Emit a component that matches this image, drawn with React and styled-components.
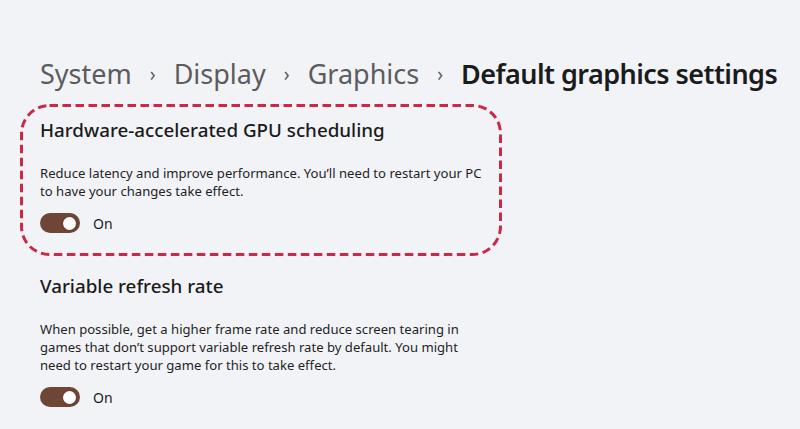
import styled, { createGlobalStyle } from 'styled-components';
import { useState } from 'react';

const GlobalStyle = createGlobalStyle`
  html, body {
    margin: 0;
    padding: 0;
    background: #f2f3f7;
  }
  body {
    font-family: 'Noto Sans', 'Open Sans', sans-serif;
    color: #1b1b1b;
  }
`;

const crumbs = ['System', 'Display', 'Graphics'];

function Toggle({ on, onClick }) {
  return (
    <ToggleRow onClick={onClick}>
      <Track $on={on}>
        <Knob $on={on} />
      </Track>
      <ToggleLabel>{on ? 'On' : 'Off'}</ToggleLabel>
    </ToggleRow>
  );
}

export default function App() {
  const [gpu, setGpu] = useState(true);
  const [vrr, setVrr] = useState(true);

  return (
    <>
      <GlobalStyle />
      <Page>
        <Breadcrumb>
          {crumbs.map((c) => (
            <Crumb key={c}>
              {c}
              <Chevron>›</Chevron>
            </Crumb>
          ))}
          <Current>Default graphics settings</Current>
        </Breadcrumb>

        <Section $highlight>
          <Outline>
            <rect x='1.5' y='1.5' width='479' height='149' rx='28' />
          </Outline>
          <Title>Hardware-accelerated GPU scheduling</Title>
          <Description>
            Reduce latency and improve performance. You’ll need to restart your PC
            to have your changes take effect.
          </Description>
          <Toggle on={gpu} onClick={() => setGpu(!gpu)} />
        </Section>

        <Section>
          <Title>Variable refresh rate</Title>
          <Description>
            When possible, get a higher frame rate and reduce screen tearing in
            games that don’t support variable refresh rate by default. You might
            need to restart your game for this to take effect.
          </Description>
          <Toggle on={vrr} onClick={() => setVrr(!vrr)} />
        </Section>
      </Page>
    </>
  );
}

const Page = styled.div`
  width: 800px;
  height: 429px;
  overflow: hidden;
  padding: 54px 0 0 20px;
  box-sizing: border-box;
`;

const Breadcrumb = styled.div`
  display: flex;
  align-items: baseline;
  padding-left: 20px;
  font-size: 27px;
  line-height: 40px;
  white-space: nowrap;
`;

const Crumb = styled.span`
  color: #5c5c5c;
  display: flex;
  align-items: baseline;
`;

const Chevron = styled.span`
  font-size: 19px;
  margin: 0 18px 0 18px;
  color: #5c5c5c;
  position: relative;
  top: -3px;
`;

const Current = styled.span`
  color: #1b1b1b;
  font-weight: 600;
  letter-spacing: -0.55px;
`;

const Section = styled.div`
  position: relative;
  width: 482px;
  box-sizing: border-box;
  padding: ${(p) => (p.$highlight ? '13px 20px 18px' : '17px 20px 0')};
  margin-top: ${(p) => (p.$highlight ? '7px' : '0')};
  height: ${(p) => (p.$highlight ? '152px' : 'auto')};
`;

const Outline = styled.svg`
  position: absolute;
  inset: 0;
  width: 482px;
  height: 152px;
  pointer-events: none;
  rect {
    fill: none;
    stroke: #cc2847;
    stroke-width: 3;
    stroke-dasharray: 8.5 4.5;
  }
`;

const Title = styled.div`
  font-size: 18.8px;
  font-weight: 500;
  line-height: 26px;
  color: #1b1b1b;
`;

const Description = styled.p`
  margin: 21px 0 0;
  font-size: 13.1px;
  line-height: 18px;
  color: #1f1f1f;
  width: 445px;
`;

const ToggleRow = styled.div`
  display: flex;
  align-items: center;
  gap: 13px;
  margin-top: 13px;
  cursor: pointer;
`;

const Track = styled.div`
  width: 40px;
  height: 20px;
  border-radius: 10px;
  box-sizing: border-box;
  background: ${(p) => (p.$on ? '#6f4535' : 'transparent')};
  border: ${(p) => (p.$on ? 'none' : '1px solid #5c5c5c')};
  display: flex;
  align-items: center;
  justify-content: ${(p) => (p.$on ? 'flex-end' : 'flex-start')};
  padding: 0 4px;
`;

const Knob = styled.div`
  width: 13px;
  height: 13px;
  border-radius: 50%;
  background: ${(p) => (p.$on ? '#ffffff' : '#5c5c5c')};
  box-shadow: 0 0 0 1px rgba(0, 0, 0, 0.08);
`;

const ToggleLabel = styled.span`
  font-size: 14px;
  color: #1b1b1b;
`;
